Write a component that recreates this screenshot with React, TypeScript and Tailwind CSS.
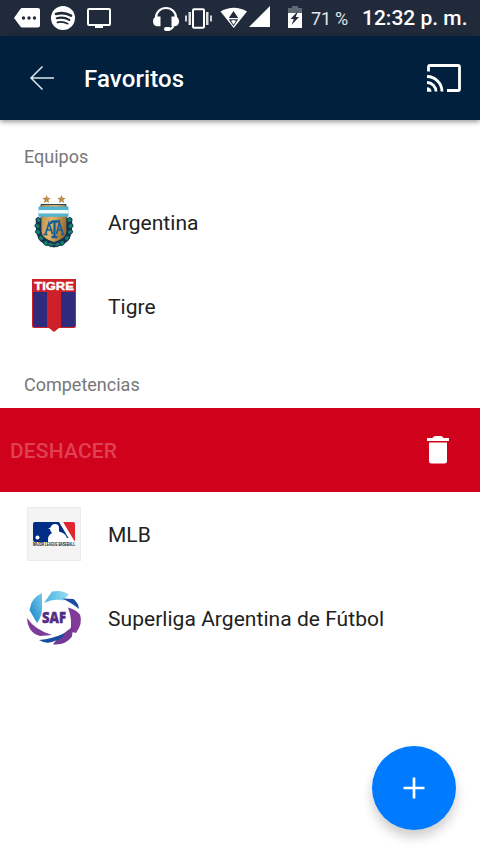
import React from "react";

const LAUREL_LEAVES = [
  [38.5, 220], [37.5, 226], [38, 232], [41, 238], [46, 243],
  [69.5, 220], [70.5, 226], [70, 232], [67, 238], [62, 243],
];

function StatusBar() {
  return (
    <div className="flex h-9 items-center bg-[#202a3b] text-white">
      <svg className="ml-[14px] h-9 w-[26px] shrink-0" viewBox="14 0 26 36">
        <path d="M22 8h16q2 0 2 2v15.500q0 2-2 2H22q-1 0-1.600-1L14 18l6.400-9Q21 8 22 8Z" fill="#fff" />
        <g fill="#202a3b">
          <circle cx="23.500" cy="18" r="1.700" />
          <circle cx="29" cy="18" r="1.700" />
          <circle cx="34.500" cy="18" r="1.700" />
        </g>
      </svg>
      <svg className="ml-[11px] h-9 w-6 shrink-0" viewBox="51 0 24 36">
        <circle cx="63" cy="18" r="12" fill="#fff" />
        <g fill="none" stroke="#202a3b" strokeLinecap="round">
          <path d="M56 14q8-2.300 15 1.600" strokeWidth="2.600" />
          <path d="M56.800 18.300q6.500-1.800 12.500 1.600" strokeWidth="2.100" />
          <path d="M57.400 22.300q5.300-1.300 10.300 1.400" strokeWidth="1.700" />
        </g>
      </svg>
      <svg className="ml-3 h-9 w-6 shrink-0" viewBox="87 0 24 36">
        <rect x="88" y="9" width="22" height="16" rx="1" fill="none" stroke="#fff" strokeWidth="2" />
        <path d="M95 25h8v3h-8z" fill="#fff" />
      </svg>
      <svg className="ml-[41px] h-9 w-7 shrink-0" viewBox="152 0 28 36">
        <path d="M156 18.500v-1a10 9.500 0 0 1 20 0v1" fill="none" stroke="#fff" strokeWidth="2.200" />
        <path d="M157 16.500h3.500v9.800H157q-4-.8-4-4.900t4-4.900ZM175 16.500h-3.500v9.800h3.500q4-.8 4-4.900t-4-4.900Z" fill="#fff" />
        <path d="M173.500 25q-.5 3.800-4 4" fill="none" stroke="#fff" strokeWidth="2" />
        <rect x="164" y="27" width="7" height="4" rx="2" fill="#fff" />
      </svg>
      <svg className="ml-[5px] h-9 w-[27px] shrink-0" viewBox="185 0 27 36">
        <rect x="193" y="9.200" width="11" height="18.600" rx="1" fill="none" stroke="#fff" strokeWidth="2" />
        <g fill="#fff">
          <path d="M188.500 12h2.500v13h-2.500zM206 12h2.500v13H206z" opacity=".85" />
          <path d="M185 15.500h2v6h-2zM210 15.500h2v6h-2z" opacity=".8" />
        </g>
      </svg>
      <svg className="ml-2 h-9 w-7 shrink-0" viewBox="220 0 28 36">
        <path d="M220.500 11.500Q234 4 247 11.500L233.700 28Z" fill="#fff" />
        <path d="m233.500 11 4.700 7h-9.400zM228.800 19.300h9.400l-4.700 7z" fill="#202a3b" />
        <path d="m233.500 20 2.500.8-2.500 4-2.500-4z" fill="#fff" />
      </svg>
      <svg className="ml-px h-9 w-[21px] shrink-0" viewBox="249 0 21 36">
        <path d="M270 6v21h-21z" fill="#fff" />
      </svg>
      <svg className="ml-[18px] h-9 w-[14px] shrink-0" viewBox="288 0 14 36">
        <path d="M292 6h6v2h4v5h-14V8h4z" fill="#626976" />
        <path d="M288 13h14v15h-14z" fill="#fff" />
        <path d="m298 11-7.500 8h3.300l-2.300 6 7.500-8h-3.300z" fill="#202a3b" />
      </svg>
      <span className="ml-[9px] w-[51px] whitespace-nowrap pt-px text-[18px] leading-6 tracking-[-0.2px] text-[#e4e6e9]">71 %</span>
      <span className="whitespace-nowrap text-[21px] font-medium leading-6">12:32 p. m.</span>
    </div>
  );
}

function Header() {
  return (
    <header className="relative flex h-[84px] items-center bg-[#00203d] text-white shadow-[0_2px_5px_rgba(0,0,0,0.4)]">
      <svg className="ml-[29px] h-7 w-[26px]" viewBox="29 64 26 28" fill="none" stroke="#dce8ed" strokeWidth="1.500">
        <path d="M54 78H31M42.500 66.500 31 78l11.500 11.500" />
      </svg>
      <h1 className="ml-[29px] pt-px text-[24px] font-medium leading-7 tracking-[0.12px]">Favoritos</h1>
      <svg className="ml-auto mr-[18px] h-[30px] w-[36px]" viewBox="426 63 36 30" fill="none" stroke="#fff" strokeWidth="2.800">
        <path d="M428.500 71.500V67q0-1.500 1.500-1.500h28q1.500 0 1.500 1.500v22q0 1.500-1.500 1.500h-11" />
        <path d="M427 76.500a15 15 0 0 1 15 15M427 82.500a9 9 0 0 1 9 9" />
        <path d="M427 87.200v4.500h4.500a4.500 4.500 0 0 0-4.500-4.500Z" fill="#fff" stroke="none" />
      </svg>
    </header>
  );
}

function ArgentinaCrest() {
  return (
    <svg className="h-[60px] w-[60px]" viewBox="24 192 60 60">
      <defs>
        <linearGradient id="gold" x1="0" x2="1" y2="0.3">
          <stop stopColor="#b38642" />
          <stop offset=".5" stopColor="#e0b76c" />
          <stop offset="1" stopColor="#a0712d" />
        </linearGradient>
      </defs>
      <g fill="#bd8b4b">
        <path d="m46.500 195 1.200 2.800 3.100.2-2.400 2 .8 3.100-2.700-1.700-2.700 1.700.8-3.100-2.400-2 3.100-.2z" />
        <path d="m61.500 195 1.200 2.800 3.100.2-2.400 2 .8 3.100-2.700-1.700-2.700 1.700.8-3.100-2.400-2 3.100-.2z" />
      </g>
      <path d="M36 218q-1.500 16 4 23 6 5 14 6.500 8-1.500 14-6.500 5.500-7 4-23Z" fill="#15304f" />
      <g fill="#128064" stroke="#142c56" strokeWidth=".8">
        {LAUREL_LEAVES.map(([x, y]) => (
          <ellipse key={`${x}-${y}`} cx={x} cy={y} rx="2.700" ry="2.300" transform={`rotate(${x < 54 ? 40 : -40} ${x} ${y})`} />
        ))}
      </g>
      <path d="M41 204.500h25v8l.8 5v14q0 7-12.800 11-13-4-13-11v-14Z" fill="url(#gold)" stroke="#173653" strokeWidth=".9" />
      <path d="M38.500 206.500h30v10.300h-30z" fill="#54b3ce" />
      <path d="M38.500 210h30v3.500h-30z" fill="#f4faf9" />
      <g fill="none" stroke="#12609b">
        <path d="m45.500 234 3.500-11 3.500 11m-6-4h5M56.500 234l3-11 3.500 11m-6-4h5" strokeWidth="1.700" />
        <path d="M51 224q0-2.500 2-2.500h5q1 0 1.500-1.500M54.500 221v16m-3 0h6" strokeWidth="2.300" />
        <path d="M43.500 234.500h4M61 234.500h3.500" strokeWidth="1.300" />
      </g>
      <path d="m47 244 3-2 4 2 4-2 3 2-4 3-3-2-3 2z" fill="#1c7662" stroke="#142c56" strokeWidth=".7" />
    </svg>
  );
}

function TigreCrest() {
  return (
    <svg className="h-[60px] w-[60px]" viewBox="24 276 60 60">
      <path d="M32 279h44v47q0 2-2 2H59l-5 4-5-4H34q-2 0-2-2Z" fill="#ce2029" />
      <path d="M33 292h14v35H35q-2 0-2-2ZM61 292h14v33q0 2-2 2H61z" fill="#302a7c" />
      <text x="54" y="289.800" textAnchor="middle" textLength="39.500" lengthAdjust="spacingAndGlyphs" fontFamily="Liberation Sans, sans-serif" fontSize="11.500" fontWeight="700" fill="#fff" stroke="#fff" strokeWidth=".4">TIGRE</text>
    </svg>
  );
}

function MlbLogo() {
  return (
    <svg className="h-[60px] w-[60px] overflow-visible" viewBox="24 504 60 60">
      <rect x="27.500" y="507.500" width="53" height="53" fill="#f4f4f4" stroke="#ebebeb" />
      <path d="M35 522h25l14 20H35q-2 0-2-2v-16q0-2 2-2Z" fill="#002d85" />
      <path d="M63 522h10q2 0 2 2v16q0 2-2 2h-1z" fill="#df2630" />
      <path d="M59 522h4l12 20H48v-3q0-3 2-4.500l2-1.500q-2-1.500-2-4h-2q1-1 2.500-1.500 1-3.500 4.500-3.500 4 0 4 4v3.500l4 1.500q3 1.500 4 5h1.500z" fill="#fff" />
      <circle cx="37.500" cy="537.500" r="2" fill="#fff" />
      <text x="54" y="546" textAnchor="middle" textLength="42" lengthAdjust="spacingAndGlyphs" fontFamily="Liberation Sans, sans-serif" fontSize="4.500" fontWeight="700" fill="#111">MAJOR LEAGUE BASEBALL</text>
    </svg>
  );
}

function SafLogo() {
  return (
    <svg className="h-[60px] w-[60px]" viewBox="24 588 60 60">
      <defs>
        <linearGradient id="sky" x1="0" y1="1" x2="1" y2="0">
          <stop stopColor="#1683c5" />
          <stop offset="1" stopColor="#77c9ee" />
        </linearGradient>
        <linearGradient id="ice">
          <stop stopColor="#48b4e1" />
          <stop offset="1" stopColor="#9addf4" />
        </linearGradient>
      </defs>
      <path d="M42 593q-11 5-12.500 17l7.500 13q5-7 5-14t0-16Z" fill="url(#sky)" />
      <path d="m44 603 8-11.500q10-2 17 3l-6 6q-9-2.500-19 2.500Z" fill="url(#ice)" />
      <path d="m62 598.500 11.500.5q5 4 5.500 10-7-6-17-10.500Z" fill="#1c4ca3" />
      <path d="M68 607.500q8 2 12 7 3 9-4 18.500-2-1-6-.5 3-12-2-25Z" fill="#813b96" />
      <path d="M53 644.500q3-6 20-18l-1 10q-6 8-16 8Z" fill="#743897" />
      <path d="M39 640q13-1 26-7-3 6-9 7.500-9 4.500-17-.5Z" fill="#164d9f" />
      <path d="M27 618q8 12 25 17l-12 1q-12-3-13-18Z" fill="#7c3c98" />
      <text x="54" y="623" textAnchor="middle" textLength="24" lengthAdjust="spacingAndGlyphs" fontFamily="Open Sans, sans-serif" fontSize="15.500" fontWeight="800" fill="#512d86" stroke="#512d86" strokeWidth=".4">SAF</text>
    </svg>
  );
}

function SectionTitle({ children }: { children: React.ReactNode }) {
  return <h2 className="h-[60px] pl-6 pt-[25px] text-[18px] font-normal leading-6 text-[#777]">{children}</h2>;
}

function Row({ logo, name }: { logo: React.ReactNode; name: string }) {
  return (
    <li className="flex h-[84px] items-center gap-6 pl-6">
      {logo}
      <span className="whitespace-nowrap pt-0.5 text-[21px] leading-6 tracking-[0.04px] text-[#212121]">{name}</span>
    </li>
  );
}

export default function App() {
  return (
    <div className="relative h-[854px] w-[480px] overflow-hidden bg-white font-['Roboto',sans-serif]">
      <StatusBar />
      <Header />
      <main>
        <SectionTitle>Equipos</SectionTitle>
        <ul>
          <Row logo={<ArgentinaCrest />} name="Argentina" />
          <Row logo={<TigreCrest />} name="Tigre" />
        </ul>
        <SectionTitle>Competencias</SectionTitle>
        <ul>
          <li className="flex h-[84px] items-center justify-between bg-[#d0021b] pl-2.5 pr-[31px]">
            <button className="pt-0.5 text-[21px] font-medium leading-6 tracking-[0.15px] text-[#e04053]">DESHACER</button>
            <svg className="h-7 w-[22px]" viewBox="427 436 22 28" fill="#fff">
              <path d="M427 438h5.500q1-2 3-2h5q2 0 3 2h5.500v3h-22zM429 442.500h18V461q0 2.500-2.500 2.500h-13q-2.500 0-2.500-2.500z" />
            </svg>
          </li>
          <Row logo={<MlbLogo />} name="MLB" />
          <Row logo={<SafLogo />} name="Superliga Argentina de Fútbol" />
        </ul>
      </main>
      <button aria-label="Agregar" className="absolute bottom-6 right-6 flex size-[84px] items-center justify-center rounded-full bg-[#007aff] shadow-[0_7px_12px_rgba(0,0,0,0.2)]">
        <svg className="size-[22px]" viewBox="0 0 22 22" stroke="#fff" strokeWidth="2.700">
          <path d="M11 .5v21M.5 11h21" />
        </svg>
      </button>
    </div>
  );
}
